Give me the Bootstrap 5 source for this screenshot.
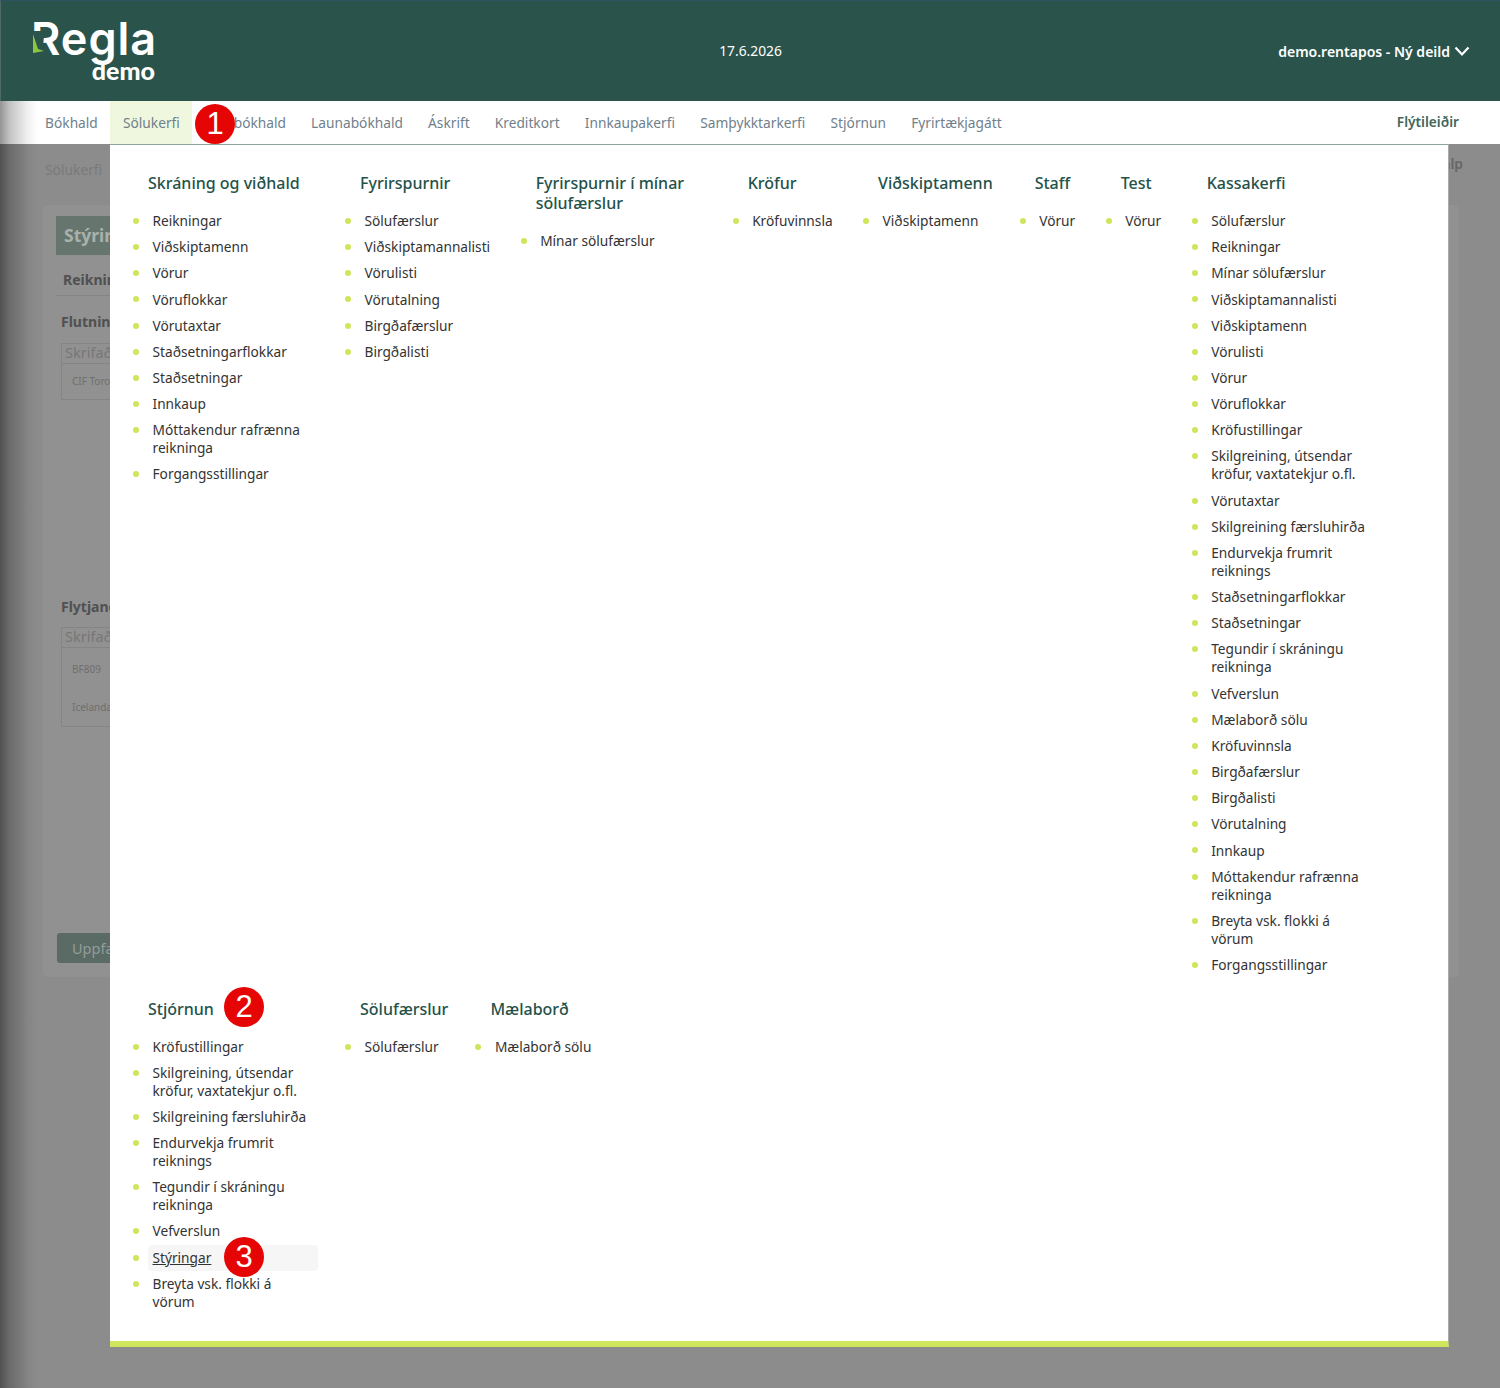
<!DOCTYPE html>
<html lang="is">
<head>
  <meta charset="UTF-8" />
  <meta name="viewport" content="width=device-width, initial-scale=1.0"/>
  <title>Regla - Stýringar</title>
  <link href="https://cdn.jsdelivr.net/npm/bootstrap@5.3.0/dist/css/bootstrap.min.css" rel="stylesheet"/>
  <style>
    body {
      background-color: #8c8c8c;
      font-family: "Noto Sans", "Open Sans", sans-serif;
      font-size: 13.7px;
      min-height: 1388px;
      overflow: hidden;
      position: relative;
    }
    .top-bar {
      height: 101px;
      background-color: #2a544b;
      border-top: 1px solid #2a5560;
      border-left: 1px solid #4d6a66;
      color: #fff;
    }
    .logo-box { flex: 1; position: relative; padding-left: 30px; }
    .logo-word { font-family: "Inter", sans-serif; font-weight: 600; font-size: 45px; line-height: 1; color: #fff; letter-spacing: 1px; margin-top: -4px; }
    .logo-sub { font-family: "Lato", sans-serif; font-weight: 900; font-size: 25px; line-height: 1; color: #fff; width: 124px; text-align: right; margin-top: -3px; }
    .logo-arrow { position: absolute; left: 29px; top: 0; }
    .top-date { font-size: 13.8px; }
    .top-user { flex: 1; font-size: 14px; font-weight: 600; padding-right: 30px; }
    .main-nav { height: 43px; background-color: #fff; padding-left: 32.5px; padding-right: 41px; }
    .main-nav .nav-link { color: #6f7f8c; font-size: 13.72px; padding: 0 12.6px; height: 43px; line-height: 43px; }
    .main-nav .nav-link.active { background-color: #eff8de; color: #6f7f8c; }
    .quick-link { color: #3f665c; font-weight: 600; font-size: 13.7px; text-decoration: none; }
    .page-body { padding: 16px 41px 0 43px; color: #777; }
    .crumb-line { font-size: 13.8px; height: 45px; color: #7a7a7a; padding-left: 2px; }
    .help-word { font-weight: 600; color: #666; margin-top: -6px; margin-right: -4px; }
    .bg-card { background-color: #919191; border-radius: 5px; height: 772px; padding: 11px 14px 11px 13px; }
    .bg-title { background-color: #66766f; color: #a9b1ac; font-size: 17.5px; font-weight: 700; height: 39px; line-height: 39px; padding-left: 8px; }
    .bg-tab { font-weight: 700; color: #505050; padding: 14px 0 4px 7px; line-height: 22px; border-bottom: 1px solid #858585; font-size: 14px; }
    .bg-label { font-weight: 700; color: #505050; font-size: 14px; line-height: 22px; padding-left: 5px; }
    .bg-flutn { margin-top: 15px; }
    .bg-flytj { margin-top: 196px; }
    .bg-input { height: 21px; margin-top: 9.5px; margin-left: 5px; width: 300px; border: 1px solid #858585; color: #777; font-size: 14.5px; line-height: 17px; padding-left: 3px; }
    .bg-list { margin-left: 5px; width: 300px; border: 1px solid #858585; border-top: 0; font-size: 10px; color: #6f6f6f; padding-left: 10px; }
    .bg-one { height: 36px; line-height: 35px; }
    .bg-two { padding-top: 2px; height: 79px; }
    .bg-row { height: 38px; line-height: 38px; }
    .bg-btn { background-color: #5a6b66; color: #929c98; font-size: 14.5px; width: 120px; height: 30px; line-height: 30px; border-radius: 3px; padding-left: 15px; margin: 206px 0 0 1px; }
    .side-fade { position: absolute; left: 0; top: 101px; bottom: 0; width: 38px; background: linear-gradient(to right, rgba(0,0,0,.42), rgba(0,0,0,.24) 25%, rgba(0,0,0,.06) 72%, rgba(0,0,0,0)); }
    .mega-menu {
      position: absolute;
      left: 110px;
      top: 144px;
      width: 1339px;
      height: 1203px;
      background-color: #fff;
      border-top: 1px solid #8fa39d;
      border-right: 1px solid #aaa;
      border-bottom: 6px solid #cfe55b;
      padding: 28px 0 0 38px;
    }
    .mega-col { max-width: 212px; padding-right: 42px; }
    .mega-head { color: #24524a; font-size: 16px; font-weight: 500; line-height: 20px; margin-bottom: 15px; position: relative; }
    .mega-list { list-style: none; padding: 0; margin: 0; }
    .mega-list li { position: relative; }
    .mega-list li::before { content: ""; position: absolute; left: -15px; top: 10px; width: 6px; height: 6px; border-radius: 50%; background-color: #cfe55b; }
    .mega-list a { display: block; color: #333; font-size: 13.7px; line-height: 18px; padding: 4.08px 3.5px 4.08px 4.5px; text-decoration: none; border-radius: 4px; }
    .mega-list a.hovered { background-color: #f6f6f6; text-decoration: underline; position: relative; }
    .row-two { margin-top: 20.5px; }
    .num-dot {
      position: absolute;
      width: 40px;
      height: 40px;
      border-radius: 50%;
      background-color: #e60505;
      color: #fff;
      font-family: "Liberation Sans", sans-serif;
      font-size: 31px;
      line-height: 40px;
      text-align: center;
      font-weight: 400;
      display: inline-block;
    }
    .dot-one { left: 195px; top: 104px; }
    .dot-two { left: 76px; top: -12px; }
    .dot-three { left: 76px; top: -8px; }
  </style>
</head>
<body>

<!-- Haus -->
<header class="top-bar d-flex align-items-center">
  <div class="logo-box">
    <div class="logo-word">Regla</div>
    <div class="logo-sub">demo</div>
    <svg class="logo-arrow" width="22" height="38" viewBox="0 0 22 38">
      <polygon points="0,11 12,11 14,16 12,38 0,38" fill="#2a544b"/>
      <polygon points="3,14 3,33 14,31 8,29" fill="#8cc63f"/>
    </svg>
  </div>
  <div class="top-date">17.6.2026</div>
  <div class="top-user d-flex align-items-center justify-content-end gap-1">
    <span>demo.rentapos - Ný deild</span>
    <svg width="16" height="11" viewBox="0 0 16 11"><path d="M1.5 1.5 8 8.5l6.5-7" fill="none" stroke="#fff" stroke-width="2.2"/></svg>
  </div>
</header>

<!-- Valmynd -->
<nav class="main-nav d-flex align-items-center justify-content-between">
  <ul class="nav flex-nowrap">
    <li class="nav-item"><a class="nav-link" href="#">Bókhald</a></li>
    <li class="nav-item"><a class="nav-link active" href="#">Sölukerfi</a></li>
    <li class="nav-item"><a class="nav-link" href="#">Verkbókhald</a></li>
    <li class="nav-item"><a class="nav-link" href="#">Launabókhald</a></li>
    <li class="nav-item"><a class="nav-link" href="#">Áskrift</a></li>
    <li class="nav-item"><a class="nav-link" href="#">Kreditkort</a></li>
    <li class="nav-item"><a class="nav-link" href="#">Innkaupakerfi</a></li>
    <li class="nav-item"><a class="nav-link" href="#">Samþykktarkerfi</a></li>
    <li class="nav-item"><a class="nav-link" href="#">Stjórnun</a></li>
    <li class="nav-item"><a class="nav-link" href="#">Fyrirtækjagátt</a></li>
  </ul>
  <a class="quick-link" href="#">Flýtileiðir</a>
</nav>

<!-- Síðan undir valmynd -->
<div class="page-body">
  <div class="crumb-line d-flex justify-content-between">
    <span>Sölukerfi</span>
    <span class="help-word">Hjálp</span>
  </div>
  <div class="bg-card">
    <div class="bg-title">Stýringar</div>
    <div class="bg-tab">Reikningar</div>
    <div class="bg-label bg-flutn">Flutningsmáti</div>
    <div class="bg-input">Skrifað</div>
    <div class="bg-list bg-one">CIF Toronto</div>
    <div class="bg-label bg-flytj">Flytjandi</div>
    <div class="bg-input">Skrifað</div>
    <div class="bg-list bg-two">
      <div class="bg-row">BF809</div>
      <div class="bg-row">Icelandair</div>
    </div>
    <div class="bg-btn">Uppfæra</div>
  </div>
</div>
<div class="side-fade"></div>

<!-- Mega valmynd -->
<div class="mega-menu d-flex flex-wrap align-content-start" id="megaMenu"></div>
<span class="num-dot dot-one">1</span>

<script>
  const dalkar = [
    ["Skráning og viðhald", ["Reikningar","Viðskiptamenn","Vörur","Vöruflokkar","Vörutaxtar","Staðsetningarflokkar","Staðsetningar","Innkaup","Móttakendur rafrænna reikninga","Forgangsstillingar"]],
    ["Fyrirspurnir", ["Sölufærslur","Viðskiptamannalisti","Vörulisti","Vörutalning","Birgðafærslur","Birgðalisti"]],
    ["Fyrirspurnir í mínar sölufærslur", ["Mínar sölufærslur"]],
    ["Kröfur", ["Kröfuvinnsla"]],
    ["Viðskiptamenn", ["Viðskiptamenn"]],
    ["Staff", ["Vörur"]],
    ["Test", ["Vörur"]],
    ["Kassakerfi", ["Sölufærslur","Reikningar","Mínar sölufærslur","Viðskiptamannalisti","Viðskiptamenn","Vörulisti","Vörur","Vöruflokkar","Kröfustillingar","Skilgreining, útsendar kröfur, vaxtatekjur o.fl.","Vörutaxtar","Skilgreining færsluhirða","Endurvekja frumrit reiknings","Staðsetningarflokkar","Staðsetningar","Tegundir í skráningu reikninga","Vefverslun","Mælaborð sölu","Kröfuvinnsla","Birgðafærslur","Birgðalisti","Vörutalning","Innkaup","Móttakendur rafrænna reikninga","Breyta vsk. flokki á vörum","Forgangsstillingar"]],
    ["Stjórnun", ["Kröfustillingar","Skilgreining, útsendar kröfur, vaxtatekjur o.fl.","Skilgreining færsluhirða","Endurvekja frumrit reiknings","Tegundir í skráningu reikninga","Vefverslun","Stýringar","Breyta vsk. flokki á vörum"]],
    ["Sölufærslur", ["Sölufærslur"]],
    ["Mælaborð", ["Mælaborð sölu"]]
  ];

  const valmynd = document.getElementById("megaMenu");
  valmynd.innerHTML = dalkar.map((d, i) => `
    <div class="mega-col${i > 7 ? " row-two" : ""}">
      <div class="mega-head">${d[0]}${d[0] === "Stjórnun" ? '<span class="num-dot dot-two">2</span>' : ""}</div>
      <ul class="mega-list">
        ${d[1].map(t => t === "Stýringar"
          ? `<li><a class="hovered" href="#">${t}<span class="num-dot dot-three">3</span></a></li>`
          : `<li><a href="#">${t}</a></li>`).join("")}
      </ul>
    </div>`).join("");
</script>
<script src="https://cdn.jsdelivr.net/npm/bootstrap@5.3.0/dist/js/bootstrap.bundle.min.js"></script>
</body>
</html>
